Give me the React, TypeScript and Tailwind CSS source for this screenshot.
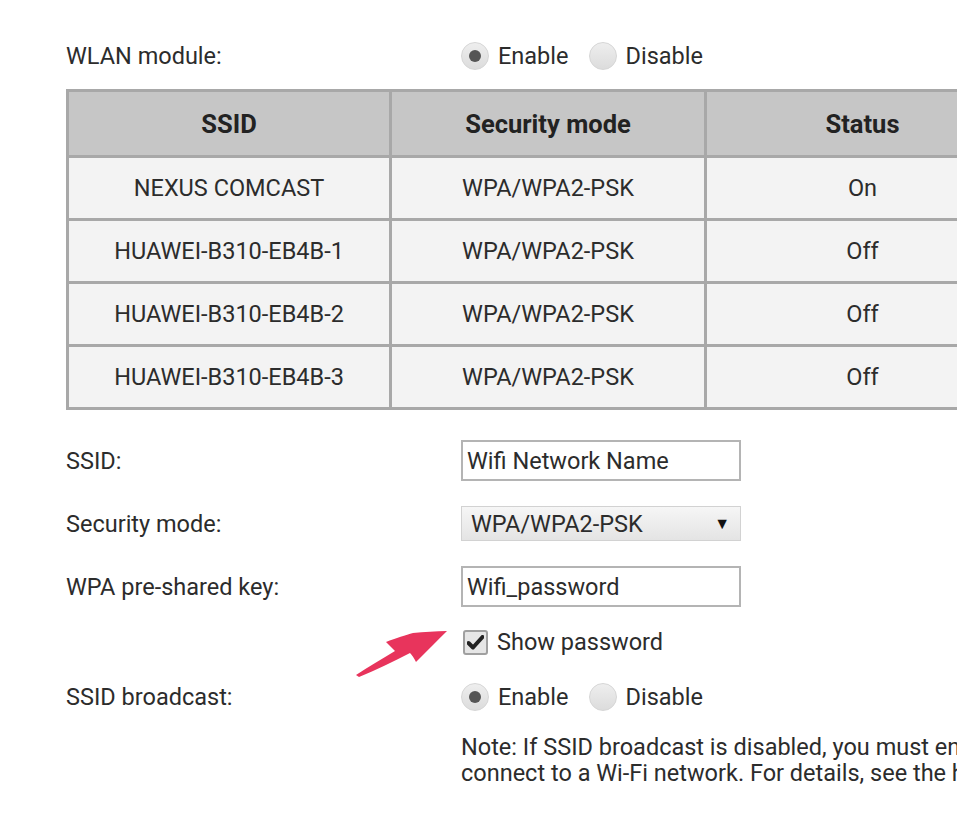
import React from 'react';

const rows = [
  { ssid: 'NEXUS COMCAST', mode: 'WPA/WPA2-PSK', status: 'On' },
  { ssid: 'HUAWEI-B310-EB4B-1', mode: 'WPA/WPA2-PSK', status: 'Off' },
  { ssid: 'HUAWEI-B310-EB4B-2', mode: 'WPA/WPA2-PSK', status: 'Off' },
  { ssid: 'HUAWEI-B310-EB4B-3', mode: 'WPA/WPA2-PSK', status: 'Off' },
];

function Radio({ checked, label }: { checked?: boolean; label: string }) {
  return (
    <label className="flex items-center gap-[9px]">
      <span className="flex h-[28px] w-[28px] items-center justify-center rounded-full border border-[#d6d6d6] bg-gradient-to-b from-[#eeeeee] to-[#dcdcdc]">
        {checked && <span className="h-[12px] w-[12px] rounded-full bg-[#555555]" />}
      </span>
      <span>{label}</span>
    </label>
  );
}

function EnableDisable() {
  return (
    <div className="flex items-center gap-[20px]">
      <Radio checked label="Enable" />
      <Radio label="Disable" />
    </div>
  );
}

export default function App() {
  return (
    <div
      className="relative h-[829px] w-[957px] overflow-hidden bg-white text-[23.5px] leading-[26px] text-[#2c2c2c]"
      style={{ fontFamily: 'Roboto, "Liberation Sans", sans-serif' }}
    >
      <div className="pl-[66px] pt-[42px]">
        {/* WLAN module */}
        <div className="grid h-[28px] grid-cols-[395px_1fr] items-center">
          <span>WLAN module:</span>
          <EnableDisable />
        </div>

        {/* SSID table */}
        <table className="mt-[19px] w-[952px] table-fixed border-collapse border-[3px] border-[#a8a8a8] text-center">
          <colgroup>
            <col className="w-[323px]" />
            <col className="w-[315px]" />
            <col className="w-[314px]" />
          </colgroup>
          <thead>
            <tr className="h-[66px] bg-[#c6c6c6] text-[25.5px] font-bold text-[#222]">
              <th className="border-[3px] border-[#a8a8a8]">SSID</th>
              <th className="border-[3px] border-[#a8a8a8]">Security mode</th>
              <th className="border-[3px] border-[#a8a8a8]">Status</th>
            </tr>
          </thead>
          <tbody>
            {rows.map((r) => (
              <tr key={r.ssid} className="h-[63px] bg-[#f3f3f3]">
                <td className="border-[3px] border-[#a8a8a8]">{r.ssid}</td>
                <td className="border-[3px] border-[#a8a8a8]">{r.mode}</td>
                <td className="border-[3px] border-[#a8a8a8]">{r.status}</td>
              </tr>
            ))}
          </tbody>
        </table>

        {/* form */}
        <div className="mt-[30px] grid grid-cols-[395px_1fr] items-center">
          <span>SSID:</span>
          <div className="flex h-[41px] w-[280px] items-center border-2 border-[#b4b4b4] bg-white px-[4px]">
            Wifi Network Name
          </div>
        </div>

        <div className="mt-[25px] grid grid-cols-[395px_1fr] items-center">
          <span>Security mode:</span>
          <div className="flex h-[35px] w-[280px] items-center justify-between border border-[#d2d2d2] bg-gradient-to-b from-[#f6f6f6] to-[#e4e4e4] pl-[9px] pr-[10px]">
            <span>WPA/WPA2-PSK</span>
            <span className="text-[16px] text-[#111]">▼</span>
          </div>
        </div>

        <div className="mt-[25px] grid grid-cols-[395px_1fr] items-center">
          <span>WPA pre-shared key:</span>
          <div className="flex h-[41px] w-[280px] items-center border-2 border-[#b4b4b4] bg-white px-[4px]">
            Wifi_password
          </div>
        </div>

        <div className="mt-[22px] grid h-[26px] grid-cols-[395px_1fr] items-center">
          <span />
          <label className="flex items-center gap-[9px] pl-[2px]">
            <span className="flex h-[25px] w-[25px] items-center justify-center rounded-[3px] border-2 border-[#a0a0a0] bg-[#e6e6e6]">
              <svg width="17" height="15" viewBox="0 0 17 15">
                <path d="M1.5 8 L6 12.5 L15.5 2" fill="none" stroke="#222" strokeWidth="4" strokeLinecap="round" strokeLinejoin="round" />
              </svg>
            </span>
            <span>Show password</span>
          </label>
        </div>

        <div className="mt-[28px] grid h-[28px] grid-cols-[395px_1fr] items-center">
          <span>SSID broadcast:</span>
          <EnableDisable />
        </div>

        <div className="mt-[23px] grid grid-cols-[395px_1fr] leading-[26px]">
          <span />
          <div className="whitespace-nowrap">
            <div>Note: If SSID broadcast is disabled, you must enter the SSID manually to</div>
            <div>connect to a Wi-Fi network. For details, see the help.</div>
          </div>
        </div>
      </div>

      {/* red annotation arrow */}
      <svg className="absolute left-[350px] top-[620px]" width="104" height="62" viewBox="0 0 104 62">
        <path
          d="M6 55 C 18 47, 32 39, 45 31 C 42 28, 39 25, 36 22 C 46 18, 56 15, 63 13 C 74 12, 86 11, 97 11 C 88 20, 77 31, 66 42 C 64 38, 62 35, 60 33 C 44 41, 26 50, 9 57 Z"
          fill="#e8345c"
        />
      </svg>
    </div>
  );
}
